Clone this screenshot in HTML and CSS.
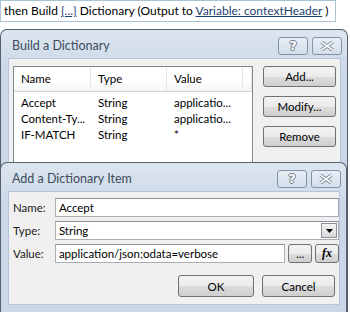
FILE: index.html
```html
<!DOCTYPE html>
<html lang="en">
<head>
  <meta charset="UTF-8">
  <title>Build a Dictionary</title>
  <link rel="stylesheet" href="styles.css">
</head>
<body>
  <!-- Workflow action sentence -->
  <div class="cmd-bar">then Build <a class="link">{...}</a> Dictionary (Output to <a class="link">Variable: contextHeader</a> )</div>

  <!-- Build a Dictionary dialog -->
  <div class="dialog dialog-main">
    <div class="title-bar">
      <span class="title">Build a Dictionary</span>
      <div class="caption-btns">
        <span class="cap-btn help">?</span>
        <span class="cap-btn close">
          <svg width="14" height="10" viewBox="0 0 14 10"><path d="M1.5 1 L12.5 9 M12.5 1 L1.5 9" stroke="#6d7a8a" stroke-width="3.4" fill="none"/><path d="M1.5 1 L12.5 9 M12.5 1 L1.5 9" stroke="#fff" stroke-width="1.6" fill="none"/></svg>
        </span>
      </div>
    </div>
    <div class="client client-main">
      <div class="list">
        <div class="list-head">
          <span class="col col-name">Name</span>
          <span class="col col-type">Type</span>
          <span class="col col-value">Value</span>
          <span class="col col-rest"></span>
        </div>
        <div class="list-body" id="list-body"></div>
      </div>
      <div class="side-btns">
        <button class="btn">Add...</button>
        <button class="btn">Modify...</button>
        <button class="btn">Remove</button>
      </div>
    </div>
  </div>

  <!-- Add a Dictionary Item dialog (on top) -->
  <div class="dialog dialog-item">
    <div class="title-bar">
      <span class="title">Add a Dictionary Item</span>
      <div class="caption-btns">
        <span class="cap-btn help">?</span>
        <span class="cap-btn close">
          <svg width="14" height="10" viewBox="0 0 14 10"><path d="M1.5 1 L12.5 9 M12.5 1 L1.5 9" stroke="#6d7a8a" stroke-width="3.4" fill="none"/><path d="M1.5 1 L12.5 9 M12.5 1 L1.5 9" stroke="#fff" stroke-width="1.6" fill="none"/></svg>
        </span>
      </div>
    </div>
    <div class="client client-item">
      <div class="field">
        <label>Name:</label>
        <div class="input">Accept</div>
      </div>
      <div class="field">
        <label>Type:</label>
        <div class="input select">
          <span>String</span>
          <span class="drop"><svg width="7" height="4" viewBox="0 0 7 4"><path d="M0 0 H7 L3.5 4 Z" fill="#000"/></svg></span>
        </div>
      </div>
      <div class="field">
        <label>Value:</label>
        <div class="input value">application/json;odata=verbose</div>
        <button class="btn small">...</button>
        <button class="btn small fx">fx</button>
      </div>
      <div class="actions">
        <button class="btn">OK</button>
        <button class="btn">Cancel</button>
      </div>
    </div>
  </div>

  <script>
    // Dictionary entries
    const items = [
      { name: 'Accept', type: 'String', value: 'applicatio...' },
      { name: 'Content-Ty...', type: 'String', value: 'applicatio...' },
      { name: 'IF-MATCH', type: 'String', value: '*' }
    ];

    const body = document.getElementById('list-body');
    items.forEach(item => {
      const row = document.createElement('div');
      row.className = 'list-row';
      row.innerHTML = `
        <span class="col col-name">${item.name}</span>
        <span class="col col-type">${item.type}</span>
        <span class="col col-value">${item.value}</span>
      `;
      body.appendChild(row);
    });
  </script>
</body>
</html>
```

FILE: styles.css
```css
body {
  margin: 0;
  width: 350px;
  height: 312px;
  overflow: hidden;
  position: relative;
  background-color: #ffffff;
  font-family: Lato, "Liberation Sans", sans-serif;
  font-size: 11.5px;
  color: #000000;
}

.cmd-bar {
  box-sizing: border-box;
  width: 336px;
  height: 22px;
  border: 1px solid #a9c4d0;
  padding: 1px 0 0 3px;
  font-size: 12px;
  line-height: 18px;
  white-space: nowrap;
  margin-bottom: 7px;
}

.link {
  color: #1c3f6e;
  text-decoration: underline;
}

.dialog {
  box-sizing: border-box;
  width: 348px;
  border: 1px solid #56606c;
  border-bottom: none;
  border-radius: 7px 7px 0 0;
  background: linear-gradient(#dde6f0, #cbd8e7 40px, #c9d7e7);
  padding: 0 6px 0 7px;
}

.dialog-main {
  height: 290px;
}

.dialog-item {
  position: absolute;
  left: 0;
  top: 162px;
  width: 347px;
  height: 150px;
  padding-bottom: 6px;
}

.title-bar {
  display: flex;
  justify-content: space-between;
  align-items: center;
  height: 28px;
}

.title {
  font-size: 12.5px;
  color: #3e4c5c;
  padding-left: 4px;
  padding-top: 3px;
}

.caption-btns {
  display: flex;
  gap: 4px;
  margin-right: -1px;
  padding-top: 3px;
}

.cap-btn {
  box-sizing: border-box;
  width: 30px;
  height: 18px;
  border: 1px solid #8393a6;
  border-radius: 3px;
  background: linear-gradient(#e8eef5, #d3deea);
  display: flex;
  align-items: center;
  justify-content: center;
}

.cap-btn.help {
  font-family: "DejaVu Sans", sans-serif;
  font-weight: bold;
  font-size: 13px;
  color: #ffffff;
  text-shadow: 1px 0 0 #6d7a8a, -1px 0 0 #6d7a8a, 0 1px 0 #6d7a8a, 0 -1px 0 #6d7a8a;
}

.client {
  box-sizing: border-box;
  background-color: #f0f0f0;
  border: 1px solid #b6c6d8;
}

.client-main {
  height: 260px;
  display: flex;
  gap: 10px;
  padding: 7px 0 0 4px;
}

/* List view */
.list {
  box-sizing: border-box;
  width: 240px;
  height: 260px;
  border: 1px solid #828790;
  background-color: #ffffff;
}

.list-head {
  display: flex;
  height: 24px;
  border-bottom: 1px solid #d5d5d5;
  background: linear-gradient(#ffffff 60%, #f3f4f6);
}

.list-head .col {
  border-right: 1px solid #e3e6ea;
  line-height: 24px;
  padding-left: 7px;
}

.col {
  box-sizing: border-box;
  white-space: nowrap;
  overflow: hidden;
}

.col-name { width: 77px; }
.col-type { width: 76px; }
.col-value { width: 76px; }
.col-rest { width: 9px; }

.list-body {
  padding-top: 3px;
}

.list-row {
  display: flex;
  height: 16px;
  line-height: 16px;
}

.list-row .col {
  padding-left: 7px;
}

/* Buttons */
.side-btns {
  display: flex;
  flex-direction: column;
  gap: 9px;
}

.btn {
  box-sizing: border-box;
  width: 73px;
  height: 21px;
  padding: 0;
  border: 1px solid #707070;
  border-radius: 3px;
  background: linear-gradient(#f2f2f2 0%, #ebebeb 50%, #dddddd 51%, #cfcfcf 100%);
  font-family: inherit;
  font-size: 11.5px;
  color: #000000;
}

/* Item form */
.client-item {
  height: 114px;
  padding: 6px 0 0 4px;
  display: flex;
  flex-direction: column;
  gap: 4px;
}

.field {
  display: flex;
  align-items: center;
  gap: 2px;
}

.field label {
  width: 40px;
  color: #202020;
}

.input {
  box-sizing: border-box;
  width: 285px;
  height: 19px;
  border: 1px solid #abadb3;
  border-top-color: #8e9096;
  background-color: #ffffff;
  padding-left: 3px;
  line-height: 17px;
  white-space: nowrap;
}

.select {
  display: flex;
  justify-content: space-between;
  align-items: center;
  padding-right: 1px;
}

.drop {
  box-sizing: border-box;
  width: 16px;
  height: 15px;
  border: 1px solid #8a8f98;
  background: linear-gradient(#f4f4f4, #d9d9d9);
  display: flex;
  align-items: center;
  justify-content: center;
}

.value {
  width: 231px;
}

.btn.small {
  width: 24px;
  height: 19px;
  margin-left: 1px;
  line-height: 10px;
}

.btn.fx {
  font-family: "Liberation Serif", serif;
  font-style: italic;
  font-weight: bold;
  font-size: 12px;
  line-height: 15px;
}

.actions {
  display: flex;
  justify-content: flex-end;
  gap: 8px;
  margin-top: 8px;
  padding-right: 4px;
}

.actions .btn {
  height: 22px;
}

.actions .btn:first-child {
  width: 76px;
}
```
